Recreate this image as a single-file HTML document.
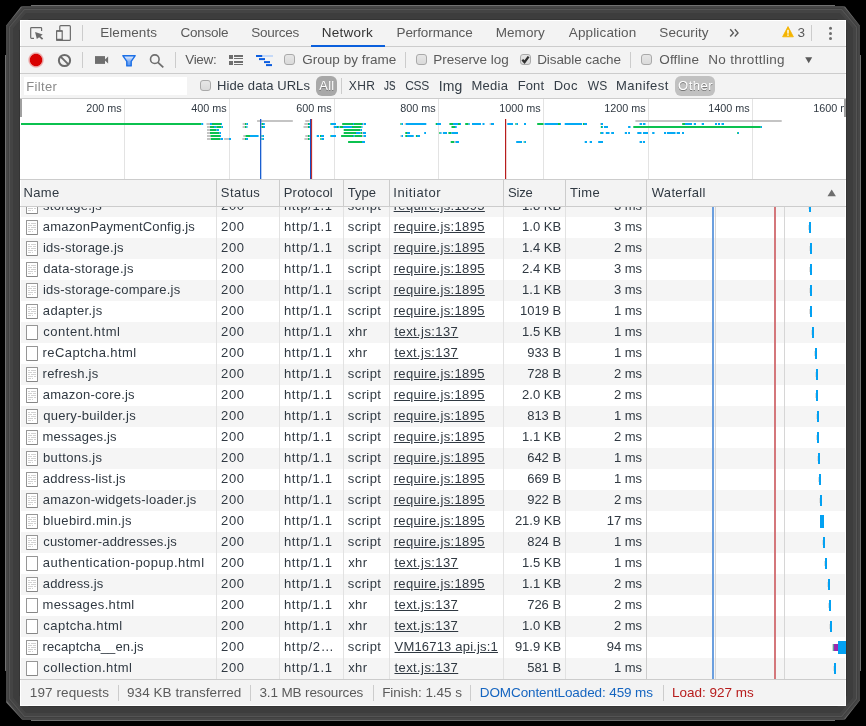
<!DOCTYPE html>
<html><head><meta charset="utf-8"><title>DevTools</title>
<style>
html,body{margin:0;padding:0;}
body{width:866px;height:726px;background:#000;position:relative;overflow:hidden;font-family:"Liberation Sans",sans-serif;font-size:13px;color:#303942;}
#frame{position:absolute;left:0;top:0;width:866px;height:726px;}
#win{position:absolute;left:20px;top:20px;width:826px;height:686px;background:#f3f3f3;overflow:hidden;will-change:transform;}
.abs{position:absolute;}
.t{position:absolute;white-space:nowrap;line-height:16px;}
/* tab bar */
#tabs{position:absolute;left:0;top:0;width:826px;height:26px;border-bottom:1px solid #ccc;background:#f3f3f3;}
#tabs .t{color:#5a5a5a;top:5px;font-size:13.5px;}
#tabs .sel{color:#333;}
#tabsel{position:absolute;left:291px;top:25px;width:74px;height:2px;background:#0a5fdc;}
.vdiv{position:absolute;width:1px;background:#ccc;}
/* toolbar */
#tb{position:absolute;left:0;top:27px;width:826px;height:26px;border-bottom:1px solid #ccc;background:#f3f3f3;}
#tb .t{color:#5a5a5a;top:5px;font-size:13.5px;}
.cb{position:absolute;width:11px;height:11px;border:1px solid #a9a9a9;border-radius:3px;background:linear-gradient(#e6e6e6,#dadada);box-sizing:border-box;}
/* filter bar */
#fb{position:absolute;left:0;top:54px;width:826px;height:24px;border-bottom:1px solid #ccc;background:#f3f3f3;}
#fb .t{color:#333c45;top:4px;font-size:13px;}
#finput{position:absolute;left:4px;top:3px;width:163px;height:18px;background:#fff;}
.pill{position:absolute;top:2px;height:20px;border-radius:6px;background:#a8a8a8;}
#fb .t.pt{color:#fff;text-shadow:0 1px 0 #777;}
/* overview */
#ov{position:absolute;left:0;top:79px;width:826px;height:80px;background:#fff;border-bottom:1px solid #ccc;overflow:hidden;}
#ov .gl{position:absolute;top:0;width:1px;height:80px;background:#e3e3e3;}
#ov .lab{position:absolute;top:2px;width:80px;text-align:right;font-size:10.8px;color:#303942;line-height:14px;white-space:nowrap;}
/* grid */
#grid{position:absolute;left:0;top:160px;width:826px;height:499px;background:#fff;overflow:hidden;}
#grid .row{position:absolute;left:0;width:826px;height:21px;}
.row.odd{background:#f5f5f5;}
.row.even{background:#fff;}
.row .t{top:2px;line-height:16px;font-size:13px;color:#303942;}
.row .t.u{text-decoration:underline;}
.fi{position:absolute;left:6px;top:3px;width:12px;height:15px;box-sizing:border-box;border:1px solid #969696;border-bottom-color:#868686;background:#fff;border-radius:1px;}
.fi.js{background:linear-gradient(#fff,#fff) no-repeat 3px 2px/1px 1px,linear-gradient(#fff,#fff) no-repeat 5px 4px/1px 1px,linear-gradient(#fff,#fff) no-repeat 3px 6px/1px 1px,linear-gradient(#fff,#fff) no-repeat 6px 8px/1px 1px,linear-gradient(#fff,#fff) no-repeat 4px 10px/1px 1px,linear-gradient(#d2d2d2,#d2d2d2) no-repeat 1px 2px/8px 1px,linear-gradient(#d2d2d2,#d2d2d2) no-repeat 1px 4px/8px 1px,linear-gradient(#d2d2d2,#d2d2d2) no-repeat 1px 6px/8px 1px,linear-gradient(#d2d2d2,#d2d2d2) no-repeat 1px 8px/8px 1px,linear-gradient(#d2d2d2,#d2d2d2) no-repeat 1px 10px/5px 1px,#fff;}
.wb{position:absolute;width:2px;height:11px;background:#03a1f2;}
.wb2::before{display:none}
.wb::before{content:"";position:absolute;left:-1px;top:3px;width:1px;height:5px;background:#dedede;}
#hdr{position:absolute;left:0;top:0;width:826px;height:26px;background:#f3f3f3;border-bottom:1px solid #ccc;}
#hdr .t{top:5px;font-size:13px;color:#303942;}
.hs{position:absolute;top:0;width:1px;height:26px;background:#ccc;}
.cs{position:absolute;top:0;width:1px;height:499px;background:#e2e2e2;}
/* status */
#st{position:absolute;left:0;top:659px;width:826px;height:27px;background:#f3f3f3;border-top:1px solid #ccc;box-sizing:border-box;}
#st .t{top:5px;color:#5a5a5a;font-size:13.5px;}

</style></head>
<body>
<svg id="frame" width="866" height="726" viewBox="0 0 866 726">
<polygon points="5.0,55.0 6.2,55.0 6.2,25.5 21.0,6.5 31.0,6.5 31.0,5.0 835.0,5.0 835.0,6.5 845.0,6.5 859.8,25.5 859.8,55.0 861.0,55.0 861.0,671.0 859.8,671.0 859.8,700.5 845.0,719.5 835.0,719.5 835.0,721.0 31.0,721.0 31.0,719.5 22.0,719.5 6.2,702.5 6.2,671.0 5.0,671.0" fill="#707070"/>
<polygon points="6.0,25.9 22.7,6.0 843.3,6.0 860.0,25.9 860.0,700.1 843.3,720.0 22.7,720.0 6.0,700.1" fill="#474747"/>
<polygon points="8.0,26.6 23.7,8.0 842.3,8.0 858.0,26.6 858.0,699.4 842.3,718.0 23.7,718.0 8.0,699.4" fill="#404040"/>
<polygon points="9.0,27.0 24.1,9.0 841.9,9.0 857.0,27.0 857.0,699.0 841.9,717.0 24.1,717.0 9.0,699.0" fill="#545454"/>
<polygon points="10.0,27.3 24.6,10.0 841.4,10.0 856.0,27.3 856.0,698.7 841.4,716.0 24.6,716.0 10.0,698.7" fill="#444444"/>
<polygon points="13.0,28.4 26.0,13.0 840.0,13.0 853.0,28.4 853.0,697.6 840.0,713.0 26.0,713.0 13.0,697.6" fill="#3d3d3d"/>
<polygon points="19.0,30.6 28.8,19.0 837.2,19.0 847.0,30.6 847.0,695.4 837.2,707.0 28.8,707.0 19.0,695.4" fill="#343434"/>
</svg>
<div id="win">
<div id="tabs">
<svg class="abs" style="left:8px;top:3px" width="18" height="18" viewBox="0 0 18 18"><path d="M6 15.400H3.500Q2.700 15.400 2.700 14.600V5.350Q2.700 4.550 3.500 4.550H12.800Q13.600 4.550 13.600 5.350V8" fill="none" stroke="#6b6b6b" stroke-width="1.200"/><path d="M7.100 9L14.700 11.500L8.800 16.100z" fill="#6b6b6b"/><path d="M10.600 12.600L14.600 16.200" stroke="#6b6b6b" stroke-width="1.700" fill="none"/></svg>
<svg class="abs" style="left:33px;top:3px" width="20" height="20" viewBox="0 0 20 20"><rect x="6.800" y="2.650" width="10.550" height="14.650" rx="0.900" fill="none" stroke="#6b6b6b" stroke-width="1.200"/><rect x="3.600" y="7.800" width="5.600" height="9.450" rx="0.700" fill="#f3f3f3" stroke="#6b6b6b" stroke-width="1.200"/><rect x="3.100" y="7.200" width="6.600" height="1.500" rx="0.500" fill="#6b6b6b"/><rect x="3.100" y="15.700" width="6.600" height="2.150" rx="0.500" fill="#6b6b6b"/></svg>
<div class="vdiv" style="left:62px;top:5px;height:16px"></div>
<svg class="abs" style="left:709px;top:8px" width="11" height="10" viewBox="0 0 11 10"><path d="M1.200 1.300l3.200 3.600-3.200 3.600M5.800 1.300l3.200 3.600-3.200 3.600" fill="none" stroke="#5a5a5a" stroke-width="1.400"/></svg>
<svg class="abs" style="left:762px;top:6px" width="12" height="12" viewBox="0 0 12 12"><path d="M6 0.600L11.400 10.800H0.600z" fill="#f4b400" stroke="#f4b400" stroke-width="0.800" stroke-linejoin="round"/><rect x="5.300" y="3.800" width="1.400" height="3.800" fill="#fff"/><rect x="5.300" y="8.400" width="1.400" height="1.400" fill="#fff"/></svg>
<div class="vdiv" style="left:791px;top:5px;height:16px"></div>
<svg class="abs" style="left:806px;top:5px" width="9" height="17" viewBox="0 0 9 17"><circle cx="4.500" cy="3.300" r="1.500" fill="#6e6e6e"/><circle cx="4.500" cy="8.500" r="1.500" fill="#6e6e6e"/><circle cx="4.500" cy="13.600" r="1.500" fill="#6e6e6e"/></svg>
<div class="t" style="left:80.14px;letter-spacing:0.093px;">Elements</div>
<div class="t" style="left:160.53px;letter-spacing:-0.272px;">Console</div>
<div class="t" style="left:231.32px;letter-spacing:-0.251px;">Sources</div>
<div class="t sel" style="left:301.85px;letter-spacing:0.213px;">Network</div>
<div class="t" style="left:376.51px;letter-spacing:-0.100px;">Performance</div>
<div class="t" style="left:475.63px;letter-spacing:0.098px;">Memory</div>
<div class="t" style="left:548.78px;letter-spacing:0.143px;">Application</div>
<div class="t" style="left:639.32px;letter-spacing:0.060px;">Security</div>
<div class="t" style="left:777.39px;letter-spacing:-0.401px;">3</div>

<div id="tabsel"></div>
</div>
<div id="tb">
<svg class="abs" style="left:6.100px;top:2.900px" width="20" height="20" viewBox="0 0 20 20"><defs><radialGradient id="rg"><stop offset="0.700" stop-color="#d80000"/><stop offset="0.760" stop-color="#d80000" stop-opacity="0.450"/><stop offset="1" stop-color="#d80000" stop-opacity="0"/></radialGradient></defs><circle cx="10" cy="10" r="8.300" fill="url(#rg)"/></svg>
<svg class="abs" style="left:36px;top:5px" width="17" height="17" viewBox="0 0 17 17"><circle cx="8.500" cy="8.500" r="5.600" fill="none" stroke="#6b6b6b" stroke-width="2"/><path d="M4.600 4.600l7.800 7.800" stroke="#6b6b6b" stroke-width="2"/></svg>
<div class="vdiv" style="left:62px;top:5px;height:16px"></div>
<svg class="abs" style="left:74px;top:8px" width="15" height="10" viewBox="0 0 15 10"><rect x="1" y="1.100" width="10" height="7.800" fill="#6e6e6e"/><path d="M10.500 5L14.100 1.500V8.500z" fill="#6e6e6e"/></svg>
<svg class="abs" style="left:100px;top:6px" width="18" height="15" viewBox="0 0 18 15"><defs><linearGradient id="fg" x1="0" y1="0" x2="0" y2="1"><stop offset="0.150" stop-color="#d3e2fb"/><stop offset="0.550" stop-color="#7fadf3"/><stop offset="1" stop-color="#4f8fee"/></linearGradient></defs><path d="M2.800 2.700H15.200L11.200 8.300V12.900H6.800V8.300z" fill="url(#fg)" stroke="#1b6fe6" stroke-width="1.400" stroke-linejoin="round"/></svg>
<svg class="abs" style="left:128.400px;top:5px" width="18" height="17" viewBox="0 0 18 17"><circle cx="6.800" cy="7.200" r="4.300" fill="none" stroke="#6e6e6e" stroke-width="1.600"/><path d="M9.900 10.400l5.400 5" stroke="#6e6e6e" stroke-width="1.800"/></svg>
<div class="vdiv" style="left:155px;top:5px;height:16px"></div>
<svg class="abs" style="left:208px;top:7px" width="16" height="12" viewBox="0 0 16 12"><g fill="#6e6e6e"><rect x="1" y="1" width="4" height="4"/><rect x="1" y="7" width="4" height="4"/><rect x="6" y="1" width="9" height="2"/><rect x="6" y="4" width="9" height="1"/><rect x="6" y="7" width="9" height="2"/><rect x="6" y="10" width="9" height="1"/></g></svg>
<svg class="abs" style="left:235px;top:7px" width="19" height="13" viewBox="0 0 19 13"><rect x="1" y="1" width="17" height="2" fill="#c5d9f7"/><g fill="#0c5ddf"><rect x="1" y="1" width="6.200" height="2"/><rect x="4" y="4.100" width="6" height="2"/><rect x="9" y="7.100" width="6" height="2"/><rect x="11" y="10.100" width="6" height="2"/></g></svg>
<div class="cb" style="left:264px;top:7px"></div>
<div class="vdiv" style="left:385px;top:5px;height:16px"></div>
<div class="cb" style="left:396px;top:7px"></div>
<div class="cb" style="left:500px;top:7px"></div>
<svg class="abs" style="left:500px;top:7px" width="11" height="11" viewBox="0 0 11 11"><path d="M2.300 5.700l2.200 2.400 4.100-5.500" fill="none" stroke="#303030" stroke-width="2.300"/></svg>
<div class="vdiv" style="left:610px;top:5px;height:16px"></div>
<div class="cb" style="left:621px;top:7px"></div>
<div class="t" style="left:165.14px;letter-spacing:-0.257px;">View:</div>
<div class="t" style="left:282.20px;letter-spacing:0.030px;">Group by frame</div>
<div class="t" style="left:413.31px;letter-spacing:-0.037px;">Preserve log</div>
<div class="t" style="left:517.14px;letter-spacing:-0.071px;">Disable cache</div>
<div class="t" style="left:639.37px;letter-spacing:0.127px;">Offline</div>
<div class="t" style="left:688.31px;letter-spacing:0.295px;">No throttling</div>

<svg class="abs" style="left:785px;top:10px" width="8" height="7" viewBox="0 0 8 7"><path d="M0.200 0.200H7.200L3.700 6.200z" fill="#5a5a5a"/></svg>
</div>
<div id="fb">
<div id="finput"></div>
<div class="cb" style="left:180px;top:6px"></div>
<div class="pill" style="left:296px;width:21px"></div>
<div class="vdiv" style="left:321px;top:4px;height:16px"></div>
<div class="pill" style="left:655px;width:40px;background:#c1c1c1"></div>
<div class="t" style="left:6.31px;letter-spacing:0.330px;color:#8a8a8a;top:4.600px">Filter</div>
<div class="t" style="left:197.03px;letter-spacing:0.089px;">Hide data URLs</div>
<div class="t pt" style="left:299.37px;letter-spacing:0.221px;">All</div>
<div class="t" style="left:328.84px;letter-spacing:0.424px;font-size:12px">XHR</div>
<div class="t" style="left:364.40px;font-size:12.500px;transform:scaleX(0.780);transform-origin:0 50%;-webkit-text-stroke:0.150px #333c45">JS</div>
<div class="t" style="left:385.35px;letter-spacing:-0.436px;font-size:12px">CSS</div>
<div class="t" style="left:418.80px;letter-spacing:0.107px;font-size:14px;top:3.500px">Img</div>
<div class="t" style="left:451.39px;letter-spacing:0.307px;">Media</div>
<div class="t" style="left:497.69px;letter-spacing:0.106px;">Font</div>
<div class="t" style="left:533.69px;letter-spacing:0.293px;">Doc</div>
<div class="t" style="left:567.63px;letter-spacing:0.272px;font-size:12px">WS</div>
<div class="t" style="left:596.03px;letter-spacing:0.464px;">Manifest</div>
<div class="t pt" style="left:658.03px;letter-spacing:0.506px;">Other</div>

</div>
<div id="ov">
<div class="gl" style="left:104px"></div><div class="lab" style="left:21.7px">200 ms</div>
<div class="gl" style="left:209px"></div><div class="lab" style="left:126.7px">400 ms</div>
<div class="gl" style="left:314px"></div><div class="lab" style="left:231.7px">600 ms</div>
<div class="gl" style="left:418px"></div><div class="lab" style="left:335.7px">800 ms</div>
<div class="gl" style="left:523px"></div><div class="lab" style="left:440.7px">1000 ms</div>
<div class="gl" style="left:628px"></div><div class="lab" style="left:545.7px">1200 ms</div>
<div class="gl" style="left:732px"></div><div class="lab" style="left:649.7px">1400 ms</div>
<div class="lab" style="left:754.7px">1600 ms</div>
<svg class="abs" style="left:0;top:0" width="826" height="80" viewBox="20 99 826 80">
<rect x="257.1" y="120" width="35.7" height="2" fill="#c4c4c4"/><rect x="305.3" y="120" width="4.3" height="2" fill="#c4c4c4"/><rect x="635.4" y="120" width="146.3" height="2" fill="#c4c4c4"/><rect x="20.0" y="123" width="181.2" height="2" fill="#0bc14f"/><rect x="201.2" y="123" width="2.0" height="2" fill="#03a9f4"/><rect x="206.5" y="123" width="3.5" height="2" fill="#c4c4c4"/><rect x="210.0" y="123" width="2.0" height="2" fill="#03a9f4"/><rect x="212.0" y="123" width="9.0" height="2" fill="#0bc14f"/><rect x="221.0" y="123" width="1.0" height="2" fill="#03a9f4"/><rect x="242.6" y="123" width="2.4" height="2" fill="#c4c4c4"/><rect x="245.0" y="123" width="1.5" height="2" fill="#0bc14f"/><rect x="246.5" y="123" width="1.5" height="2" fill="#03a9f4"/><rect x="261.5" y="123" width="1.5" height="2" fill="#0bc14f"/><rect x="263.0" y="123" width="1.8" height="2" fill="#03a9f4"/><rect x="304.4" y="123" width="3.6" height="2" fill="#c4c4c4"/><rect x="308.0" y="123" width="1.0" height="2" fill="#0bc14f"/><rect x="309.0" y="123" width="1.0" height="2" fill="#03a9f4"/><rect x="330.4" y="123" width="0.6" height="2" fill="#0bc14f"/><rect x="331.0" y="123" width="5.0" height="2" fill="#03a9f4"/><rect x="342.2" y="123" width="10.8" height="2" fill="#0bc14f"/><rect x="353.0" y="123" width="1.0" height="2" fill="#03a9f4"/><rect x="354.0" y="123" width="8.0" height="2" fill="#0bc14f"/><rect x="362.0" y="123" width="1.0" height="2" fill="#03a9f4"/><rect x="363.0" y="123" width="1.0" height="2" fill="#c4c4c4"/><rect x="364.0" y="123" width="2.0" height="2" fill="#03a9f4"/><rect x="400.4" y="123" width="1.1" height="2" fill="#0bc14f"/><rect x="401.5" y="123" width="1.5" height="2" fill="#03a9f4"/><rect x="404.7" y="123" width="1.3" height="2" fill="#c4c4c4"/><rect x="406.0" y="123" width="20.3" height="2" fill="#03a9f4"/><rect x="435.7" y="123" width="1.3" height="2" fill="#0bc14f"/><rect x="437.0" y="123" width="4.0" height="2" fill="#03a9f4"/><rect x="449.4" y="123" width="3.6" height="2" fill="#0bc14f"/><rect x="453.0" y="123" width="5.0" height="2" fill="#03a9f4"/><rect x="458.0" y="123" width="2.0" height="2" fill="#0bc14f"/><rect x="460.0" y="123" width="1.0" height="2" fill="#03a9f4"/><rect x="465.2" y="123" width="3.3" height="2" fill="#0bc14f"/><rect x="468.5" y="123" width="1.2" height="2" fill="#03a9f4"/><rect x="472.0" y="123" width="9.0" height="2" fill="#03a9f4"/><rect x="482.5" y="123" width="2.0" height="2" fill="#03a9f4"/><rect x="489.6" y="123" width="1.4" height="2" fill="#c4c4c4"/><rect x="491.0" y="123" width="3.0" height="2" fill="#03a9f4"/><rect x="507.3" y="123" width="5.7" height="2" fill="#03a9f4"/><rect x="515.4" y="123" width="1.1" height="2" fill="#0bc14f"/><rect x="516.5" y="123" width="1.5" height="2" fill="#03a9f4"/><rect x="524.0" y="123" width="2.0" height="2" fill="#03a9f4"/><rect x="537.2" y="123" width="6.3" height="2" fill="#0bc14f"/><rect x="544.5" y="123" width="13.5" height="2" fill="#03a9f4"/><rect x="558.0" y="123" width="2.0" height="2" fill="#0bc14f"/><rect x="560.0" y="123" width="1.0" height="2" fill="#03a9f4"/><rect x="564.7" y="123" width="17.3" height="2" fill="#03a9f4"/><rect x="582.9" y="123" width="1.1" height="2" fill="#0bc14f"/><rect x="584.0" y="123" width="3.0" height="2" fill="#03a9f4"/><rect x="600.0" y="123" width="1.0" height="2" fill="#c4c4c4"/><rect x="601.0" y="123" width="2.0" height="2" fill="#03a9f4"/><rect x="639.6" y="123" width="2.4" height="2" fill="#03a9f4"/><rect x="642.9" y="123" width="2.6" height="2" fill="#03a9f4"/><rect x="682.2" y="123" width="2.8" height="2" fill="#0bc14f"/><rect x="685.0" y="123" width="7.0" height="2" fill="#03a9f4"/><rect x="693.8" y="123" width="2.2" height="2" fill="#03a9f4"/><rect x="701.7" y="123" width="2.3" height="2" fill="#03a9f4"/><rect x="715.0" y="123" width="2.0" height="2" fill="#03a9f4"/><rect x="718.0" y="123" width="2.0" height="2" fill="#03a9f4"/><rect x="721.5" y="123" width="2.5" height="2" fill="#03a9f4"/><rect x="207.0" y="126" width="3.0" height="2" fill="#c4c4c4"/><rect x="210.0" y="126" width="4.0" height="2" fill="#0bc14f"/><rect x="214.0" y="126" width="2.3" height="2" fill="#03a9f4"/><rect x="216.3" y="126" width="5.2" height="2" fill="#0bc14f"/><rect x="221.5" y="126" width="1.5" height="2" fill="#03a9f4"/><rect x="242.6" y="126" width="2.4" height="2" fill="#c4c4c4"/><rect x="245.0" y="126" width="1.5" height="2" fill="#0bc14f"/><rect x="246.5" y="126" width="1.0" height="2" fill="#03a9f4"/><rect x="261.5" y="126" width="1.5" height="2" fill="#0bc14f"/><rect x="263.0" y="126" width="2.0" height="2" fill="#03a9f4"/><rect x="303.5" y="126" width="4.5" height="2" fill="#c4c4c4"/><rect x="308.0" y="126" width="1.0" height="2" fill="#0bc14f"/><rect x="309.0" y="126" width="1.0" height="2" fill="#03a9f4"/><rect x="333.3" y="126" width="0.7" height="2" fill="#c4c4c4"/><rect x="334.0" y="126" width="3.0" height="2" fill="#03a9f4"/><rect x="337.0" y="126" width="1.0" height="2" fill="#0bc14f"/><rect x="338.0" y="126" width="1.0" height="2" fill="#03a9f4"/><rect x="339.5" y="126" width="3.5" height="2" fill="#0bc14f"/><rect x="343.0" y="126" width="9.0" height="2" fill="#03a9f4"/><rect x="352.0" y="126" width="9.5" height="2" fill="#0bc14f"/><rect x="361.5" y="126" width="1.0" height="2" fill="#03a9f4"/><rect x="451.5" y="126" width="3.5" height="2" fill="#0bc14f"/><rect x="455.0" y="126" width="1.7" height="2" fill="#03a9f4"/><rect x="600.8" y="126" width="1.2" height="2" fill="#0bc14f"/><rect x="602.0" y="126" width="1.0" height="2" fill="#03a9f4"/><rect x="604.0" y="126" width="4.0" height="2" fill="#03a9f4"/><rect x="628.1" y="126" width="2.4" height="2" fill="#03a9f4"/><rect x="633.3" y="126" width="127.5" height="2" fill="#0bc14f"/><rect x="760.8" y="126" width="1.2" height="2" fill="#03a9f4"/><rect x="207.0" y="129" width="3.0" height="2" fill="#c4c4c4"/><rect x="210.0" y="129" width="6.5" height="2" fill="#0bc14f"/><rect x="216.5" y="129" width="2.5" height="2" fill="#03a9f4"/><rect x="343.7" y="129" width="16.8" height="2" fill="#0bc14f"/><rect x="360.5" y="129" width="1.5" height="2" fill="#03a9f4"/><rect x="207.0" y="132" width="3.0" height="2" fill="#c4c4c4"/><rect x="210.0" y="132" width="9.3" height="2" fill="#0bc14f"/><rect x="219.3" y="132" width="1.7" height="2" fill="#03a9f4"/><rect x="343.7" y="132" width="12.3" height="2" fill="#0bc14f"/><rect x="356.0" y="132" width="4.5" height="2" fill="#03a9f4"/><rect x="360.5" y="132" width="1.5" height="2" fill="#0bc14f"/><rect x="362.0" y="132" width="1.0" height="2" fill="#c4c4c4"/><rect x="363.0" y="132" width="3.0" height="2" fill="#03a9f4"/><rect x="405.3" y="132" width="1.7" height="2" fill="#0bc14f"/><rect x="407.0" y="132" width="3.0" height="2" fill="#03a9f4"/><rect x="424.2" y="132" width="1.8" height="2" fill="#03a9f4"/><rect x="439.3" y="132" width="1.0" height="2" fill="#0bc14f"/><rect x="440.3" y="132" width="1.2" height="2" fill="#03a9f4"/><rect x="442.9" y="132" width="4.1" height="2" fill="#03a9f4"/><rect x="448.4" y="132" width="3.1" height="2" fill="#0bc14f"/><rect x="451.5" y="132" width="6.5" height="2" fill="#03a9f4"/><rect x="600.3" y="132" width="0.7" height="2" fill="#0bc14f"/><rect x="601.0" y="132" width="2.5" height="2" fill="#03a9f4"/><rect x="605.8" y="132" width="3.7" height="2" fill="#03a9f4"/><rect x="611.2" y="132" width="2.8" height="2" fill="#03a9f4"/><rect x="624.8" y="132" width="2.2" height="2" fill="#03a9f4"/><rect x="628.1" y="132" width="1.9" height="2" fill="#03a9f4"/><rect x="637.3" y="132" width="4.2" height="2" fill="#03a9f4"/><rect x="643.0" y="132" width="5.0" height="2" fill="#03a9f4"/><rect x="652.2" y="132" width="2.3" height="2" fill="#03a9f4"/><rect x="664.0" y="132" width="2.0" height="2" fill="#03a9f4"/><rect x="666.9" y="132" width="8.6" height="2" fill="#03a9f4"/><rect x="676.7" y="132" width="3.3" height="2" fill="#03a9f4"/><rect x="682.0" y="132" width="2.0" height="2" fill="#03a9f4"/><rect x="737.2" y="132" width="0.8" height="2" fill="#0bc14f"/><rect x="738.0" y="132" width="1.0" height="2" fill="#03a9f4"/><rect x="207.0" y="135" width="3.5" height="2" fill="#c4c4c4"/><rect x="210.5" y="135" width="9.5" height="2" fill="#0bc14f"/><rect x="220.0" y="135" width="1.0" height="2" fill="#03a9f4"/><rect x="243.3" y="135" width="2.2" height="2" fill="#c4c4c4"/><rect x="245.5" y="135" width="4.5" height="2" fill="#0bc14f"/><rect x="250.0" y="135" width="8.6" height="2" fill="#03a9f4"/><rect x="261.5" y="135" width="1.0" height="2" fill="#0bc14f"/><rect x="262.5" y="135" width="1.5" height="2" fill="#03a9f4"/><rect x="305.3" y="135" width="2.7" height="2" fill="#c4c4c4"/><rect x="308.0" y="135" width="1.5" height="2" fill="#0bc14f"/><rect x="309.5" y="135" width="0.5" height="2" fill="#03a9f4"/><rect x="316.7" y="135" width="2.3" height="2" fill="#03a9f4"/><rect x="320.0" y="135" width="1.0" height="2" fill="#0bc14f"/><rect x="321.0" y="135" width="3.0" height="2" fill="#03a9f4"/><rect x="330.4" y="135" width="0.6" height="2" fill="#0bc14f"/><rect x="331.0" y="135" width="5.0" height="2" fill="#03a9f4"/><rect x="341.1" y="135" width="11.9" height="2" fill="#0bc14f"/><rect x="353.0" y="135" width="1.5" height="2" fill="#03a9f4"/><rect x="354.5" y="135" width="7.5" height="2" fill="#0bc14f"/><rect x="362.0" y="135" width="1.5" height="2" fill="#c4c4c4"/><rect x="363.5" y="135" width="2.5" height="2" fill="#03a9f4"/><rect x="400.4" y="135" width="1.1" height="2" fill="#c4c4c4"/><rect x="401.5" y="135" width="1.5" height="2" fill="#03a9f4"/><rect x="405.3" y="135" width="1.7" height="2" fill="#0bc14f"/><rect x="407.0" y="135" width="6.7" height="2" fill="#03a9f4"/><rect x="415.9" y="135" width="1.1" height="2" fill="#0bc14f"/><rect x="417.0" y="135" width="3.0" height="2" fill="#03a9f4"/><rect x="207.0" y="138" width="4.0" height="2" fill="#c4c4c4"/><rect x="211.0" y="138" width="9.5" height="2" fill="#0bc14f"/><rect x="220.5" y="138" width="2.5" height="2" fill="#03a9f4"/><rect x="224.1" y="138" width="4.9" height="2" fill="#c4c4c4"/><rect x="229.0" y="138" width="2.0" height="2" fill="#03a9f4"/><rect x="242.3" y="138" width="2.7" height="2" fill="#c4c4c4"/><rect x="245.0" y="138" width="1.0" height="2" fill="#0bc14f"/><rect x="246.0" y="138" width="2.0" height="2" fill="#03a9f4"/><rect x="261.5" y="138" width="1.0" height="2" fill="#0bc14f"/><rect x="262.5" y="138" width="1.5" height="2" fill="#03a9f4"/><rect x="304.4" y="138" width="3.6" height="2" fill="#c4c4c4"/><rect x="308.0" y="138" width="1.5" height="2" fill="#0bc14f"/><rect x="309.5" y="138" width="0.5" height="2" fill="#03a9f4"/><rect x="320.3" y="138" width="1.2" height="2" fill="#0bc14f"/><rect x="321.5" y="138" width="2.5" height="2" fill="#03a9f4"/><rect x="348.1" y="141" width="13.9" height="2" fill="#0bc14f"/><rect x="362.0" y="141" width="3.0" height="2" fill="#03a9f4"/><rect x="450.7" y="141" width="3.3" height="2" fill="#0bc14f"/><rect x="454.0" y="141" width="1.5" height="2" fill="#c4c4c4"/><rect x="455.5" y="141" width="3.5" height="2" fill="#03a9f4"/><rect x="516.2" y="141" width="5.8" height="2" fill="#03a9f4"/><rect x="523.7" y="141" width="0.8" height="2" fill="#0bc14f"/><rect x="524.5" y="141" width="1.5" height="2" fill="#03a9f4"/><rect x="584.7" y="141" width="2.3" height="2" fill="#03a9f4"/><rect x="589.7" y="141" width="2.3" height="2" fill="#03a9f4"/><rect x="598.2" y="141" width="4.8" height="2" fill="#03a9f4"/><rect x="639.6" y="141" width="2.4" height="2" fill="#03a9f4"/><rect x="642.9" y="141" width="2.1" height="2" fill="#03a9f4"/>
<rect x="260" y="119" width="1.300" height="60" fill="#1a5fd0"/><rect x="310" y="119" width="1.100" height="60" fill="#1a4fc0"/><rect x="311.100" y="119" width="1" height="60" fill="#b71c1c"/><rect x="505" y="119" width="1.200" height="60" fill="#b71c1c"/>
</svg>
</div>
<div id="grid">
<div class="row odd" style="top:16px"><span class="fi js"></span>
<div class="t c" style="left:23.10px;letter-spacing:0.250px;">storage.js</div>
<div class="t c" style="left:201.04px;letter-spacing:0.651px;">200</div>
<div class="t c" style="left:263.91px;letter-spacing:0.683px;">http&#47;1.1</div>
<div class="t c" style="left:327.86px;letter-spacing:0.395px;">script</div>
<div class="t c u" style="left:373.64px;letter-spacing:0.349px;">require.js:1895</div>
<div class="t c" style="right:284.86px;">1.8 KB</div>
<div class="t c" style="right:203.92px;">3 ms</div>
</div>
<div class="row even" style="top:37px"><span class="fi js"></span>
<div class="t c" style="left:22.85px;letter-spacing:0.180px;">amazonPaymentConfig.js</div>
<div class="t c" style="left:201.04px;letter-spacing:0.651px;">200</div>
<div class="t c" style="left:263.91px;letter-spacing:0.683px;">http&#47;1.1</div>
<div class="t c" style="left:327.86px;letter-spacing:0.395px;">script</div>
<div class="t c u" style="left:373.64px;letter-spacing:0.349px;">require.js:1895</div>
<div class="t c" style="right:284.86px;">1.0 KB</div>
<div class="t c" style="right:203.92px;">3 ms</div>
</div>
<div class="row odd" style="top:58px"><span class="fi js"></span>
<div class="t c" style="left:22.95px;letter-spacing:0.259px;">ids-storage.js</div>
<div class="t c" style="left:201.04px;letter-spacing:0.651px;">200</div>
<div class="t c" style="left:263.91px;letter-spacing:0.683px;">http&#47;1.1</div>
<div class="t c" style="left:327.86px;letter-spacing:0.395px;">script</div>
<div class="t c u" style="left:373.64px;letter-spacing:0.349px;">require.js:1895</div>
<div class="t c" style="right:284.86px;">1.4 KB</div>
<div class="t c" style="right:203.92px;">2 ms</div>
</div>
<div class="row even" style="top:79px"><span class="fi js"></span>
<div class="t c" style="left:23.21px;letter-spacing:0.309px;">data-storage.js</div>
<div class="t c" style="left:201.04px;letter-spacing:0.651px;">200</div>
<div class="t c" style="left:263.91px;letter-spacing:0.683px;">http&#47;1.1</div>
<div class="t c" style="left:327.86px;letter-spacing:0.395px;">script</div>
<div class="t c u" style="left:373.64px;letter-spacing:0.349px;">require.js:1895</div>
<div class="t c" style="right:284.86px;">2.4 KB</div>
<div class="t c" style="right:203.92px;">3 ms</div>
</div>
<div class="row odd" style="top:100px"><span class="fi js"></span>
<div class="t c" style="left:22.95px;letter-spacing:0.239px;">ids-storage-compare.js</div>
<div class="t c" style="left:201.04px;letter-spacing:0.651px;">200</div>
<div class="t c" style="left:263.91px;letter-spacing:0.683px;">http&#47;1.1</div>
<div class="t c" style="left:327.86px;letter-spacing:0.395px;">script</div>
<div class="t c u" style="left:373.64px;letter-spacing:0.349px;">require.js:1895</div>
<div class="t c" style="right:284.86px;">1.1 KB</div>
<div class="t c" style="right:203.92px;">3 ms</div>
</div>
<div class="row even" style="top:121px"><span class="fi js"></span>
<div class="t c" style="left:22.85px;letter-spacing:0.326px;">adapter.js</div>
<div class="t c" style="left:201.04px;letter-spacing:0.651px;">200</div>
<div class="t c" style="left:263.91px;letter-spacing:0.683px;">http&#47;1.1</div>
<div class="t c" style="left:327.86px;letter-spacing:0.395px;">script</div>
<div class="t c u" style="left:373.64px;letter-spacing:0.349px;">require.js:1895</div>
<div class="t c" style="right:284.86px;">1019 B</div>
<div class="t c" style="right:203.92px;">1 ms</div>
</div>
<div class="row odd" style="top:142px"><span class="fi doc"></span>
<div class="t c" style="left:23.30px;letter-spacing:0.526px;">content.html</div>
<div class="t c" style="left:201.04px;letter-spacing:0.651px;">200</div>
<div class="t c" style="left:263.91px;letter-spacing:0.683px;">http&#47;1.1</div>
<div class="t c" style="left:328.13px;letter-spacing:0.399px;">xhr</div>
<div class="t c u" style="left:374.47px;letter-spacing:0.410px;">text.js:137</div>
<div class="t c" style="right:284.86px;">1.5 KB</div>
<div class="t c" style="right:203.92px;">1 ms</div>
</div>
<div class="row even" style="top:163px"><span class="fi doc"></span>
<div class="t c" style="left:22.57px;letter-spacing:0.420px;">reCaptcha.html</div>
<div class="t c" style="left:201.04px;letter-spacing:0.651px;">200</div>
<div class="t c" style="left:263.91px;letter-spacing:0.683px;">http&#47;1.1</div>
<div class="t c" style="left:328.13px;letter-spacing:0.399px;">xhr</div>
<div class="t c u" style="left:374.47px;letter-spacing:0.410px;">text.js:137</div>
<div class="t c" style="right:284.86px;">933 B</div>
<div class="t c" style="right:203.92px;">1 ms</div>
</div>
<div class="row odd" style="top:184px"><span class="fi js"></span>
<div class="t c" style="left:22.57px;letter-spacing:0.244px;">refresh.js</div>
<div class="t c" style="left:201.04px;letter-spacing:0.651px;">200</div>
<div class="t c" style="left:263.91px;letter-spacing:0.683px;">http&#47;1.1</div>
<div class="t c" style="left:327.86px;letter-spacing:0.395px;">script</div>
<div class="t c u" style="left:373.64px;letter-spacing:0.349px;">require.js:1895</div>
<div class="t c" style="right:284.86px;">728 B</div>
<div class="t c" style="right:203.92px;">2 ms</div>
</div>
<div class="row even" style="top:205px"><span class="fi js"></span>
<div class="t c" style="left:22.85px;letter-spacing:0.221px;">amazon-core.js</div>
<div class="t c" style="left:201.04px;letter-spacing:0.651px;">200</div>
<div class="t c" style="left:263.91px;letter-spacing:0.683px;">http&#47;1.1</div>
<div class="t c" style="left:327.86px;letter-spacing:0.395px;">script</div>
<div class="t c u" style="left:373.64px;letter-spacing:0.349px;">require.js:1895</div>
<div class="t c" style="right:284.86px;">2.0 KB</div>
<div class="t c" style="right:203.92px;">2 ms</div>
</div>
<div class="row odd" style="top:226px"><span class="fi js"></span>
<div class="t c" style="left:23.21px;letter-spacing:0.287px;">query-builder.js</div>
<div class="t c" style="left:201.04px;letter-spacing:0.651px;">200</div>
<div class="t c" style="left:263.91px;letter-spacing:0.683px;">http&#47;1.1</div>
<div class="t c" style="left:327.86px;letter-spacing:0.395px;">script</div>
<div class="t c u" style="left:373.64px;letter-spacing:0.349px;">require.js:1895</div>
<div class="t c" style="right:284.86px;">813 B</div>
<div class="t c" style="right:203.92px;">1 ms</div>
</div>
<div class="row even" style="top:247px"><span class="fi js"></span>
<div class="t c" style="left:22.56px;letter-spacing:0.180px;">messages.js</div>
<div class="t c" style="left:201.04px;letter-spacing:0.651px;">200</div>
<div class="t c" style="left:263.91px;letter-spacing:0.683px;">http&#47;1.1</div>
<div class="t c" style="left:327.86px;letter-spacing:0.395px;">script</div>
<div class="t c u" style="left:373.64px;letter-spacing:0.349px;">require.js:1895</div>
<div class="t c" style="right:284.86px;">1.1 KB</div>
<div class="t c" style="right:203.92px;">2 ms</div>
</div>
<div class="row odd" style="top:268px"><span class="fi js"></span>
<div class="t c" style="left:22.99px;letter-spacing:0.384px;">buttons.js</div>
<div class="t c" style="left:201.04px;letter-spacing:0.651px;">200</div>
<div class="t c" style="left:263.91px;letter-spacing:0.683px;">http&#47;1.1</div>
<div class="t c" style="left:327.86px;letter-spacing:0.395px;">script</div>
<div class="t c u" style="left:373.64px;letter-spacing:0.349px;">require.js:1895</div>
<div class="t c" style="right:284.86px;">642 B</div>
<div class="t c" style="right:203.92px;">1 ms</div>
</div>
<div class="row even" style="top:289px"><span class="fi js"></span>
<div class="t c" style="left:22.85px;letter-spacing:0.235px;">address-list.js</div>
<div class="t c" style="left:201.04px;letter-spacing:0.651px;">200</div>
<div class="t c" style="left:263.91px;letter-spacing:0.683px;">http&#47;1.1</div>
<div class="t c" style="left:327.86px;letter-spacing:0.395px;">script</div>
<div class="t c u" style="left:373.64px;letter-spacing:0.349px;">require.js:1895</div>
<div class="t c" style="right:284.86px;">669 B</div>
<div class="t c" style="right:203.92px;">1 ms</div>
</div>
<div class="row odd" style="top:310px"><span class="fi js"></span>
<div class="t c" style="left:22.85px;letter-spacing:0.263px;">amazon-widgets-loader.js</div>
<div class="t c" style="left:201.04px;letter-spacing:0.651px;">200</div>
<div class="t c" style="left:263.91px;letter-spacing:0.683px;">http&#47;1.1</div>
<div class="t c" style="left:327.86px;letter-spacing:0.395px;">script</div>
<div class="t c u" style="left:373.64px;letter-spacing:0.349px;">require.js:1895</div>
<div class="t c" style="right:284.86px;">922 B</div>
<div class="t c" style="right:203.92px;">2 ms</div>
</div>
<div class="row even" style="top:331px"><span class="fi js"></span>
<div class="t c" style="left:22.98px;letter-spacing:0.338px;">bluebird.min.js</div>
<div class="t c" style="left:201.04px;letter-spacing:0.651px;">200</div>
<div class="t c" style="left:263.91px;letter-spacing:0.683px;">http&#47;1.1</div>
<div class="t c" style="left:327.86px;letter-spacing:0.395px;">script</div>
<div class="t c u" style="left:373.64px;letter-spacing:0.349px;">require.js:1895</div>
<div class="t c" style="right:284.86px;">21.9 KB</div>
<div class="t c" style="right:203.92px;">17 ms</div>
</div>
<div class="row odd" style="top:352px"><span class="fi js"></span>
<div class="t c" style="left:23.30px;letter-spacing:0.132px;">customer-addresses.js</div>
<div class="t c" style="left:201.04px;letter-spacing:0.651px;">200</div>
<div class="t c" style="left:263.91px;letter-spacing:0.683px;">http&#47;1.1</div>
<div class="t c" style="left:327.86px;letter-spacing:0.395px;">script</div>
<div class="t c u" style="left:373.64px;letter-spacing:0.349px;">require.js:1895</div>
<div class="t c" style="right:284.86px;">824 B</div>
<div class="t c" style="right:203.92px;">1 ms</div>
</div>
<div class="row even" style="top:373px"><span class="fi doc"></span>
<div class="t c" style="left:22.85px;letter-spacing:0.484px;">authentication-popup.html</div>
<div class="t c" style="left:201.04px;letter-spacing:0.651px;">200</div>
<div class="t c" style="left:263.91px;letter-spacing:0.683px;">http&#47;1.1</div>
<div class="t c" style="left:328.13px;letter-spacing:0.399px;">xhr</div>
<div class="t c u" style="left:374.47px;letter-spacing:0.410px;">text.js:137</div>
<div class="t c" style="right:284.86px;">1.5 KB</div>
<div class="t c" style="right:203.92px;">1 ms</div>
</div>
<div class="row odd" style="top:394px"><span class="fi js"></span>
<div class="t c" style="left:22.85px;letter-spacing:0.125px;">address.js</div>
<div class="t c" style="left:201.04px;letter-spacing:0.651px;">200</div>
<div class="t c" style="left:263.91px;letter-spacing:0.683px;">http&#47;1.1</div>
<div class="t c" style="left:327.86px;letter-spacing:0.395px;">script</div>
<div class="t c u" style="left:373.64px;letter-spacing:0.349px;">require.js:1895</div>
<div class="t c" style="right:284.86px;">1.1 KB</div>
<div class="t c" style="right:203.92px;">2 ms</div>
</div>
<div class="row even" style="top:415px"><span class="fi doc"></span>
<div class="t c" style="left:22.56px;letter-spacing:0.356px;">messages.html</div>
<div class="t c" style="left:201.04px;letter-spacing:0.651px;">200</div>
<div class="t c" style="left:263.91px;letter-spacing:0.683px;">http&#47;1.1</div>
<div class="t c" style="left:328.13px;letter-spacing:0.399px;">xhr</div>
<div class="t c u" style="left:374.47px;letter-spacing:0.410px;">text.js:137</div>
<div class="t c" style="right:284.86px;">726 B</div>
<div class="t c" style="right:203.92px;">2 ms</div>
</div>
<div class="row odd" style="top:436px"><span class="fi doc"></span>
<div class="t c" style="left:23.30px;letter-spacing:0.474px;">captcha.html</div>
<div class="t c" style="left:201.04px;letter-spacing:0.651px;">200</div>
<div class="t c" style="left:263.91px;letter-spacing:0.683px;">http&#47;1.1</div>
<div class="t c" style="left:328.13px;letter-spacing:0.399px;">xhr</div>
<div class="t c u" style="left:374.47px;letter-spacing:0.410px;">text.js:137</div>
<div class="t c" style="right:284.86px;">1.0 KB</div>
<div class="t c" style="right:203.92px;">2 ms</div>
</div>
<div class="row even" style="top:457px"><span class="fi js"></span>
<div class="t c" style="left:22.57px;letter-spacing:0.121px;">recaptcha__en.js</div>
<div class="t c" style="left:201.04px;letter-spacing:0.651px;">200</div>
<div class="t c" style="left:263.91px;letter-spacing:0.706px;">http&#47;2…</div>
<div class="t c" style="left:327.86px;letter-spacing:0.395px;">script</div>
<div class="t c u" style="left:374.55px;letter-spacing:0.186px;">VM16713 api.js:1</div>
<div class="t c" style="right:284.86px;">91.9 KB</div>
<div class="t c" style="right:203.92px;">94 ms</div>
</div>
<div class="row odd" style="top:478px"><span class="fi doc"></span>
<div class="t c" style="left:23.30px;letter-spacing:0.453px;">collection.html</div>
<div class="t c" style="left:201.04px;letter-spacing:0.651px;">200</div>
<div class="t c" style="left:263.91px;letter-spacing:0.683px;">http&#47;1.1</div>
<div class="t c" style="left:328.13px;letter-spacing:0.399px;">xhr</div>
<div class="t c u" style="left:374.47px;letter-spacing:0.410px;">text.js:137</div>
<div class="t c" style="right:284.86px;">581 B</div>
<div class="t c" style="right:203.92px;">1 ms</div>
</div>
<div class="wb" style="left:789px;top:21px"></div>
<div class="wb" style="left:789px;top:42px"></div>
<div class="wb" style="left:790px;top:63px"></div>
<div class="wb" style="left:790px;top:84px"></div>
<div class="wb" style="left:790px;top:105px"></div>
<div class="wb" style="left:790px;top:126px"></div>
<div class="wb" style="left:792px;top:147px"></div>
<div class="wb" style="left:795px;top:168px"></div>
<div class="wb" style="left:796px;top:189px"></div>
<div class="wb" style="left:796px;top:210px"></div>
<div class="wb" style="left:797px;top:231px"></div>
<div class="wb" style="left:797px;top:252px"></div>
<div class="wb" style="left:798px;top:273px"></div>
<div class="wb" style="left:799px;top:294px"></div>
<div class="wb" style="left:800px;top:315px"></div>
<div class="wb" style="left:803px;top:357px"></div>
<div class="wb" style="left:805px;top:378px"></div>
<div class="wb" style="left:808px;top:399px"></div>
<div class="wb" style="left:809px;top:420px"></div>
<div class="wb" style="left:810px;top:441px"></div>
<div class="wb" style="left:814px;top:483px"></div>
<div class="wb wb2" style="left:800px;top:335px;width:4px;height:13px"></div>
<div class="abs" style="left:812px;top:464px;width:2px;height:7px;background:linear-gradient(90deg,#d6d6d6 0,#dedede 70%,#5fa39d 70%)"></div>
<div class="abs" style="left:814px;top:464px;width:4px;height:7px;background:#9c27b0"></div>
<div class="wb wb2" style="left:818px;top:461px;width:8px;height:13px"></div>
<div class="cs" style="left:196px"></div>
<div class="cs" style="left:259px"></div>
<div class="cs" style="left:323px"></div>
<div class="cs" style="left:369px"></div>
<div class="cs" style="left:483px"></div>
<div class="cs" style="left:545px"></div>
<div class="cs" style="left:626px;background:#cdcdcd"></div>
<div class="abs" style="left:692px;top:27px;width:2px;height:472px;background:#6b9fdf"></div>
<div class="abs" style="left:695px;top:27px;width:1px;height:472px;background:#d6d6d6"></div>
<div class="abs" style="left:754px;top:27px;width:2px;height:472px;background:#d4777b"></div>
<div class="abs" style="left:764px;top:27px;width:1px;height:472px;background:#d6d6d6"></div>
<div id="hdr">
<div class="t" style="left:3.49px;letter-spacing:0.342px;">Name</div>
<div class="t" style="left:200.83px;letter-spacing:0.434px;">Status</div>
<div class="t" style="left:263.75px;letter-spacing:0.189px;">Protocol</div>
<div class="t" style="left:327.75px;letter-spacing:0.033px;">Type</div>
<div class="t" style="left:373.36px;letter-spacing:0.574px;">Initiator</div>
<div class="t" style="left:487.95px;letter-spacing:-0.171px;">Size</div>
<div class="t" style="left:550.12px;letter-spacing:0.384px;">Time</div>
<div class="t" style="left:631.64px;letter-spacing:0.370px;">Waterfall</div>

<div class="hs" style="left:196px"></div>
<div class="hs" style="left:259px"></div>
<div class="hs" style="left:323px"></div>
<div class="hs" style="left:369px"></div>
<div class="hs" style="left:483px"></div>
<div class="hs" style="left:545px"></div>
<div class="hs" style="left:626px"></div>
<svg class="abs" style="left:807px;top:9px" width="10" height="8" viewBox="0 0 10 8"><path d="M0.500 7.200L4.700 0.600L8.900 7.200z" fill="#6e6e6e"/></svg>
</div>
</div>
<div id="st">
<div class="t" style="left:9.84px;letter-spacing:0.096px;">197 requests</div>
<div class="t" style="left:107.05px;letter-spacing:0.057px;">934 KB transferred</div>
<div class="t" style="left:239.48px;letter-spacing:-0.126px;">3.1 MB resources</div>
<div class="t" style="left:362.14px;letter-spacing:-0.032px;">Finish: 1.45 s</div>
<div class="t" style="left:459.80px;letter-spacing:-0.104px;color:#1565c0">DOMContentLoaded: 459 ms</div>
<div class="t" style="left:652.06px;letter-spacing:-0.007px;color:#b71c1c">Load: 927 ms</div>

<div class="vdiv" style="left:98px;top:5px;height:16px"></div>
<div class="vdiv" style="left:230px;top:5px;height:16px"></div>
<div class="vdiv" style="left:353px;top:5px;height:16px"></div>
<div class="vdiv" style="left:450px;top:5px;height:16px"></div>
<div class="vdiv" style="left:642.5px;top:5px;height:16px"></div>
</div>
<div class="abs" style="left:0;top:0;width:1px;height:686px;background:#fff"></div><div class="abs" style="left:825px;top:0;width:1px;height:686px;background:#fff"></div><div class="abs" style="left:0;top:0;width:826px;height:1px;background:#fff"></div><div class="abs" style="left:0;top:685px;width:826px;height:1px;background:#fff"></div>
<div class="abs" style="left:0;top:26px;width:1px;height:1px;background:#ccc"></div><div class="abs" style="left:825px;top:26px;width:1px;height:1px;background:#ccc"></div><div class="abs" style="left:0;top:53px;width:1px;height:1px;background:#ccc"></div><div class="abs" style="left:825px;top:53px;width:1px;height:1px;background:#ccc"></div><div class="abs" style="left:0;top:78px;width:1px;height:1px;background:#ccc"></div><div class="abs" style="left:825px;top:78px;width:1px;height:1px;background:#ccc"></div><div class="abs" style="left:0;top:159px;width:1px;height:1px;background:#ccc"></div><div class="abs" style="left:825px;top:159px;width:1px;height:1px;background:#ccc"></div><div class="abs" style="left:0;top:186px;width:1px;height:1px;background:#ccc"></div><div class="abs" style="left:825px;top:186px;width:1px;height:1px;background:#ccc"></div><div class="abs" style="left:0;top:659px;width:1px;height:1px;background:#ccc"></div><div class="abs" style="left:825px;top:659px;width:1px;height:1px;background:#ccc"></div><div class="abs" style="left:825px;top:621px;width:1px;height:13px;background:#03a1f2"></div><div class="abs" style="left:0;top:79px;width:1.800px;height:17.600px;background:#a0a0a0"></div><div class="abs" style="left:824px;top:79px;width:2px;height:17.500px;background:#a0a0a0"></div>
</div>
</body></html>
